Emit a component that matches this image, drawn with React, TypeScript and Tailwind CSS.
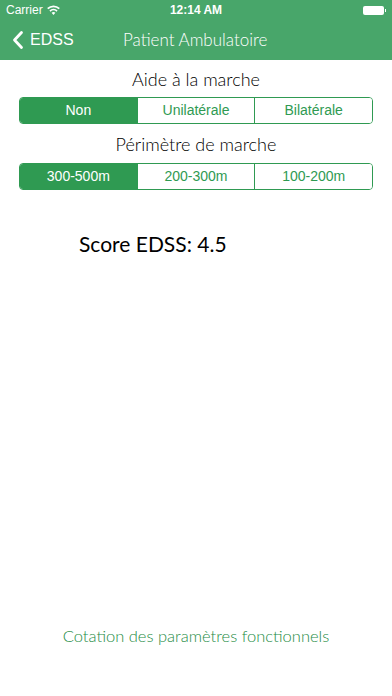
import { useState } from 'react';

const gill = { fontFamily: 'Lato, "Open Sans", sans-serif' };
const helv = { fontFamily: '"Liberation Sans", Arial, sans-serif' };

function Segmented({ options, value, onChange }: { options: string[]; value: number; onChange: (i: number) => void }) {
  return (
    <div className="mx-[19px] flex h-[27px] overflow-hidden rounded-[4px] border border-[#2f9a52]" style={helv}>
      {options.map((o, i) => (
        <button
          key={o}
          onClick={() => onChange(i)}
          className={`flex-1 text-[14px] ${i > 0 ? 'border-l border-[#2f9a52]' : ''} ${
            i === value ? 'bg-[#2f9a52] text-white' : 'bg-white text-[#2f9a52]'
          }`}
        >
          {o}
        </button>
      ))}
    </div>
  );
}

export default function App() {
  const [aide, setAide] = useState(0);
  const [perim, setPerim] = useState(0);

  return (
    <div className="flex h-[696px] w-[392px] flex-col bg-white">
      <div className="bg-[#48a66a] text-white">
        <div className="relative flex h-[20px] items-center px-[6px] text-[12px]" style={helv}>
          <span className="flex items-center gap-[4px]">
            Carrier
            <svg width="13" height="10" viewBox="0 0 13 10" fill="white">
              <path d="M6.5 10 L4.6 7.7 A3 3 0 0 1 8.4 7.7 Z" />
              <path d="M6.5 3.8 A6 6 0 0 1 10.6 5.4 L9.5 6.7 A4.3 4.3 0 0 0 3.5 6.7 L2.4 5.4 A6 6 0 0 1 6.5 3.8 Z" />
              <path d="M6.5 0.5 A9.5 9.5 0 0 1 12.9 3 L11.7 4.3 A7.8 7.8 0 0 0 1.3 4.3 L0.1 3 A9.5 9.5 0 0 1 6.5 0.5 Z" />
            </svg>
          </span>
          <span className="absolute left-1/2 -translate-x-1/2 font-bold">12:14 AM</span>
          <span className="ml-auto flex items-center">
            <span className="h-[9px] w-[21px] rounded-[2px] bg-white" />
            <span className="ml-[1px] h-[3px] w-[1.5px] bg-white" />
          </span>
        </div>
        <div className="relative flex h-[40px] items-center" style={gill}>
          <div className="flex items-center pl-[12px] text-[16px]" style={helv}>
            <svg width="12" height="20" viewBox="0 0 12 20" fill="none" stroke="white" strokeWidth="2.8" strokeLinecap="round" strokeLinejoin="round">
              <path d="M9.5 2.5 L2.5 10 L9.5 17.5" />
            </svg>
            <span className="ml-[6px]">EDSS</span>
          </div>
          <span className="absolute left-[123px] text-[17px] font-light">Patient Ambulatoire</span>
        </div>
      </div>

      <div className="flex flex-1 flex-col" style={gill}>
        <p className="mt-[8px] text-center text-[18px] font-light leading-[22px] text-black">Aide à la marche</p>
        <div className="mt-[7px]">
          <Segmented options={['Non', 'Unilatérale', 'Bilatérale']} value={aide} onChange={setAide} />
        </div>
        <p className="mt-[9px] text-center text-[18px] font-light leading-[22px] text-black">Périmètre de marche</p>
        <div className="mt-[8px]">
          <Segmented options={['300-500m', '200-300m', '100-200m']} value={perim} onChange={setPerim} />
        </div>
        <p className="ml-[79px] mt-[41px] text-[21px] leading-[26px] text-black">Score EDSS: 4.5</p>
        <p className="mb-[47px] mt-auto text-center text-[16.5px] font-light text-[#1e8c45]">
          Cotation des paramètres fonctionnels
        </p>
      </div>
    </div>
  );
}
